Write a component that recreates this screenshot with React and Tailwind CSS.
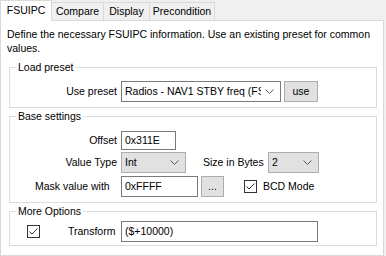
import React from 'react';

const font = { fontFamily: '"Liberation Sans", Arial, sans-serif' };

function Chevron() {
  return (
    <svg width="9" height="5" viewBox="0 0 9 5" className="shrink-0">
      <path d="M0.5 0.5 L4.5 4.5 L8.5 0.5" fill="none" stroke="#5a5a5a" strokeWidth="1" />
    </svg>
  );
}

function Combo({ value, width, white }) {
  return (
    <div
      className={`flex items-center justify-between gap-[4px] h-[21px] pl-[3px] pr-[6px] border ${
        white ? 'bg-white border-[#7a7a7a]' : 'bg-[#e1e1e1] border-[#adadad]'
      } ${width} whitespace-nowrap`}
    >
      <span className="min-w-0 overflow-hidden">{value}</span>
      <Chevron />
    </div>
  );
}

function TextBox({ value, width, height = 'h-[21px]' }) {
  return (
    <div className={`flex items-center ${height} ${width} pl-[3px] bg-white border border-[#7a7a7a] whitespace-nowrap`}>
      {value}
    </div>
  );
}

function Button({ children, width }) {
  return (
    <div className={`flex items-center justify-center h-[21px] ${width} bg-[#e1e1e1] border border-[#adadad]`}>
      {children}
    </div>
  );
}

function CheckBox() {
  return (
    <div className="w-[13px] h-[13px] bg-white border border-[#333333] flex items-center justify-center shrink-0">
      <svg width="11" height="11" viewBox="0 0 11 11">
        <path d="M1.5 5.5 L4 8 L9.5 2.5" fill="none" stroke="#333333" strokeWidth="1" />
      </svg>
    </div>
  );
}

function Group({ title, className, children }) {
  return (
    <fieldset className={`w-[368px] ml-[8px] border border-[#dcdcdc] ${className}`}>
      <legend className="ml-[6px] px-[2px] leading-[14px]">{title}</legend>
      {children}
    </fieldset>
  );
}

function Label({ children }) {
  return <div className="w-[111px] pr-[4px] text-right whitespace-nowrap">{children}</div>;
}

export default function App() {
  const tabs = [
    { name: 'Compare', w: 'w-[53px]' },
    { name: 'Display', w: 'w-[47px]' },
    { name: 'Precondition', w: 'w-[66px]' },
  ];

  return (
    <div className="w-[386px] h-[256px] bg-[#f0f0f0] overflow-hidden text-[10.5px] text-black" style={font}>
      <div className="flex items-end h-[20px]">
        <div className="relative z-10 flex items-center justify-center h-[21px] w-[52px] -mb-px bg-white border border-b-0 border-[#d9d9d9]">
          FSUIPC
        </div>
        {tabs.map((t) => (
          <div
            key={t.name}
            className={`flex items-center justify-center h-[18px] ${t.w} -ml-px bg-[#f0f0f0] border border-b-0 border-[#d9d9d9]`}
          >
            {t.name}
          </div>
        ))}
      </div>

      <div className="w-[384px] h-[236px] bg-white border border-[#d9d9d9]">
        <p className="w-[374px] pl-[6px] pt-[6px] leading-[14px]">
          Define the necessary FSUIPC information. Use an existing preset for common values.
        </p>

        <Group title="Load preset" className="mt-[5px] pt-[7px] pb-[5px]">
          <div className="flex items-center h-[21px]">
            <Label>Use preset</Label>
            <Combo value="Radios - NAV1 STBY freq (FSUIPC)" width="w-[160px]" white />
            <div className="ml-[3px]">
              <Button width="w-[34px]">use</Button>
            </div>
          </div>
        </Group>

        <Group title="Base settings" className="mt-px pt-[8px] pb-[5px]">
          <div className="flex items-center h-[19px]">
            <Label>Offset</Label>
            <TextBox value="0x311E" width="w-[55px]" height="h-[19px]" />
          </div>
          <div className="flex items-center h-[21px] mt-[2px]">
            <Label>Value Type</Label>
            <Combo value="Int" width="w-[65px]" />
            <div className="ml-[17px] w-[65px] whitespace-nowrap">Size in Bytes</div>
            <Combo value="2" width="w-[51px]" />
          </div>
          <div className="flex items-center h-[21px] mt-[3px]">
            <div className="w-[111px] pl-[25px] whitespace-nowrap">Mask value with</div>
            <TextBox value="0xFFFF" width="w-[77px]" />
            <div className="ml-[3px]">
              <Button width="w-[23px]">...</Button>
            </div>
            <div className="ml-[20px]">
              <CheckBox />
            </div>
            <div className="ml-[6px]">BCD Mode</div>
          </div>
        </Group>

        <Group title="More Options" className="mt-px pt-[3px] pb-[3px]">
          <div className="flex items-center h-[21px]">
            <div className="ml-[17px]">
              <CheckBox />
            </div>
            <div className="ml-[28px] w-[53px] whitespace-nowrap">Transform</div>
            <TextBox value="($+10000)" width="w-[197px]" />
          </div>
        </Group>
      </div>
    </div>
  );
}
